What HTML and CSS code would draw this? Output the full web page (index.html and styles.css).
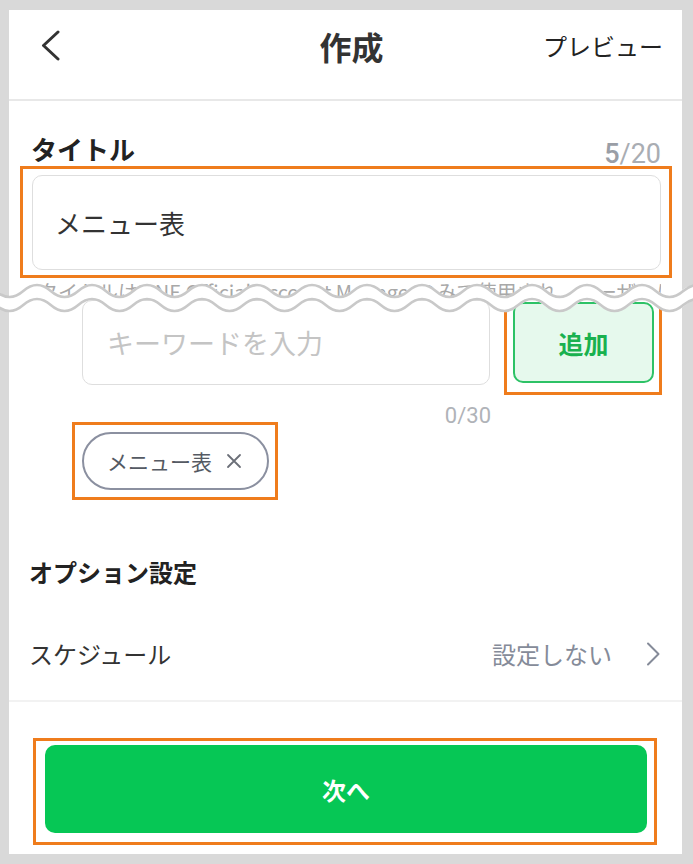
FILE: index.html
```html
<!DOCTYPE html>
<html lang="ja">
<head>
<meta charset="utf-8">
<title>作成</title>
<link rel="stylesheet" href="styles.css">
</head>
<body>
<div class="frame">
  <div class="screen">
    <header class="header">
      <div class="back">
        <svg width="22" height="32" viewBox="0 0 22 32"><path d="M18 2 L3.5 15.5 L18 29" fill="none" stroke="#333" stroke-width="3" stroke-linecap="round" stroke-linejoin="round"/></svg>
      </div>
      <h1 class="title">作成</h1>
      <div class="preview">プレビュー</div>
    </header>

    <div class="label-row">
      <span class="label">タイトル</span>
      <span class="count"><b>5</b>/20</span>
    </div>
    <div class="hl hl-title">
      <div class="field title-field">メニュー表</div>
    </div>
    <div class="help">タイトルはLINE Official Account Managerのみで使用され、ユーザーには表示されません。</div>

    <div class="kw-row">
      <div class="field kw-field">キーワードを入力</div>
      <div class="hl hl-add">
        <div class="add-btn">追加</div>
      </div>
    </div>
    <div class="kw-count">0/30</div>
    <div class="hl hl-chip">
      <div class="chip">
        <span>メニュー表</span>
        <svg width="16" height="16" viewBox="0 0 16 16"><path d="M2 2 L14 14 M14 2 L2 14" stroke="#6b6f78" stroke-width="1.8" stroke-linecap="round"/></svg>
      </div>
    </div>

    <h2 class="section">オプション設定</h2>
    <div class="row">
      <span class="row-label">スケジュール</span>
      <span class="row-value">設定しない
        <svg width="14" height="24" viewBox="0 0 14 24"><path d="M2 1.5 L12.5 12 L2 22.5" fill="none" stroke="#858b99" stroke-width="2" stroke-linecap="round" stroke-linejoin="round"/></svg>
      </span>
    </div>

    <div class="hl hl-next">
      <div class="next-btn">次へ</div>
    </div>
  </div>
</div>
<svg class="wave" width="693" height="40" viewBox="0 0 693 40">
  <path d="M-31.75 19 q13.75 -12 27.5 0 t27.5 0 t27.5 0 t27.5 0 t27.5 0 t27.5 0 t27.5 0 t27.5 0 t27.5 0 t27.5 0 t27.5 0 t27.5 0 t27.5 0 t27.5 0 t27.5 0 t27.5 0 t27.5 0 t27.5 0 t27.5 0 t27.5 0 t27.5 0 t27.5 0 t27.5 0 t27.5 0 t27.5 0 t27.5 0 t27.5 0 t27.5 0" fill="none" stroke="#fff" stroke-width="14"/>
  <path d="M-31.75 12 q13.75 -12 27.5 0 t27.5 0 t27.5 0 t27.5 0 t27.5 0 t27.5 0 t27.5 0 t27.5 0 t27.5 0 t27.5 0 t27.5 0 t27.5 0 t27.5 0 t27.5 0 t27.5 0 t27.5 0 t27.5 0 t27.5 0 t27.5 0 t27.5 0 t27.5 0 t27.5 0 t27.5 0 t27.5 0 t27.5 0 t27.5 0 t27.5 0 t27.5 0" fill="none" stroke="#c9c9c9" stroke-width="2.6"/>
  <path d="M-31.75 26 q13.75 -12 27.5 0 t27.5 0 t27.5 0 t27.5 0 t27.5 0 t27.5 0 t27.5 0 t27.5 0 t27.5 0 t27.5 0 t27.5 0 t27.5 0 t27.5 0 t27.5 0 t27.5 0 t27.5 0 t27.5 0 t27.5 0 t27.5 0 t27.5 0 t27.5 0 t27.5 0 t27.5 0 t27.5 0 t27.5 0 t27.5 0 t27.5 0 t27.5 0" fill="none" stroke="#c9c9c9" stroke-width="2.6"/>
</svg>
</body>
</html>
```

FILE: styles.css
```css
* { box-sizing: border-box; }
html, body { margin: 0; padding: 0; }
body {
  position: relative;
  width: 693px;
  height: 864px;
  background: #d9d9d9;
  font-family: "Noto Sans CJK JP", "Noto Sans", sans-serif;
  color: #333;
  overflow: hidden;
}
.frame {
  padding: 10px 11px 10px 9px;
}
.screen {
  background: #fff;
  height: 844px;
  overflow: hidden;
}
.header {
  height: 91px;
  border-bottom: 2px solid #e8e8e8;
  padding: 16px 19px 0 31px;
  display: grid;
  grid-template-columns: 1fr auto 1fr;
  grid-template-rows: 40px;
  align-items: center;
}
.back { display: flex; align-items: center; height: 40px; }
.back svg { display: block; }
.title {
  margin: 0;
  font-size: 32px;
  font-weight: 700;
  line-height: 40px;
  color: #333;
}
.preview {
  justify-self: end;
  font-size: 24px;
  line-height: 40px;
  color: #222;
}
.label-row {
  margin-top: 28px;
  height: 37px;
  padding: 0 21px 0 22px;
  display: flex;
  justify-content: space-between;
  align-items: flex-end;
}
.label {
  font-size: 26px;
  font-weight: 700;
  line-height: 34px;
  color: #222;
}
.count {
  font-family: Roboto, "Liberation Sans", sans-serif;
  font-size: 27px;
  line-height: 30px;
  color: #a9adb3;
  margin-bottom: -3px;
}
.count b { font-weight: 500; color: #9a9ea6; }
.hl { border: 3px solid #ef7c1c; }
.hl-title {
  margin: 0 10px 0 11px;
  height: 112px;
  padding: 6px 8px 5px 9px;
}
.field {
  border: 1.5px solid #dedede;
  border-radius: 10px;
  display: flex;
  align-items: center;
}
.title-field {
  height: 95px;
  padding-left: 22px;
  font-size: 26px;
  color: #333;
}
.help {
  margin: 2px 21px 0 29px;
  height: 17px;
  overflow: hidden;
  font-size: 20px;
  line-height: 24px;
  color: #a8a8a8;
  white-space: nowrap;
}
.kw-row {
  display: flex;
  align-items: flex-start;
  padding-left: 73px;
  gap: 14px;
}
.kw-field {
  width: 408px;
  height: 85px;
  margin-top: 3px;
  padding-left: 24px;
  font-size: 27px;
  color: #c4c4c4;
}
.hl-add {
  width: 158px;
  height: 98px;
  padding: 2px 5px 9px 6px;
}
.add-btn {
  height: 81px;
  background: #e6f9ed;
  border: 2px solid #2dc266;
  border-radius: 10px;
  display: flex;
  align-items: center;
  justify-content: center;
  font-size: 25px;
  font-weight: 700;
  color: #19b14f;
}
.kw-count {
  margin-top: 11px;
  margin-bottom: -3px;
  height: 19px;
  line-height: 19px;
  text-align: right;
  padding-right: 191px;
  font-family: Roboto, "Liberation Sans", sans-serif;
  font-size: 22px;
  color: #b0b3b8;
}
.hl-chip {
  margin-left: 63px;
  width: 206px;
  height: 78px;
  padding: 7px 6px 7px 7px;
}
.chip {
  height: 58px;
  border: 2px solid #8b90a0;
  border-radius: 29px;
  display: flex;
  align-items: center;
  gap: 14px;
  padding: 0 25px 0 23px;
  font-size: 21px;
  color: #555a63;
}
.chip svg { display: block; flex: none; }
.section {
  margin: 56px 0 0;
  padding-left: 20px;
  font-size: 24px;
  font-weight: 700;
  line-height: 32px;
  color: #222;
}
.row {
  margin-top: 19px;
  height: 95px;
  border-bottom: 2px solid #f2f2f2;
  padding: 0 22px 0 20px;
  display: flex;
  align-items: center;
  justify-content: space-between;
}
.row-label { font-size: 24px; color: #333; }
.row-value {
  display: flex;
  align-items: center;
  gap: 34px;
  font-size: 24px;
  color: #858b99;
}
.row-value svg { display: block; }
.hl-next {
  margin: 36px 0 0 24px;
  width: 624px;
  height: 107px;
  padding: 4px 7px 9px 9px;
}
.next-btn {
  height: 88px;
  background: #06c755;
  border-radius: 10px;
  display: flex;
  align-items: center;
  justify-content: center;
  font-size: 24px;
  font-weight: 700;
  color: #fff;
}
.wave {
  position: absolute;
  left: 0;
  top: 279px;
  display: block;
}
```
